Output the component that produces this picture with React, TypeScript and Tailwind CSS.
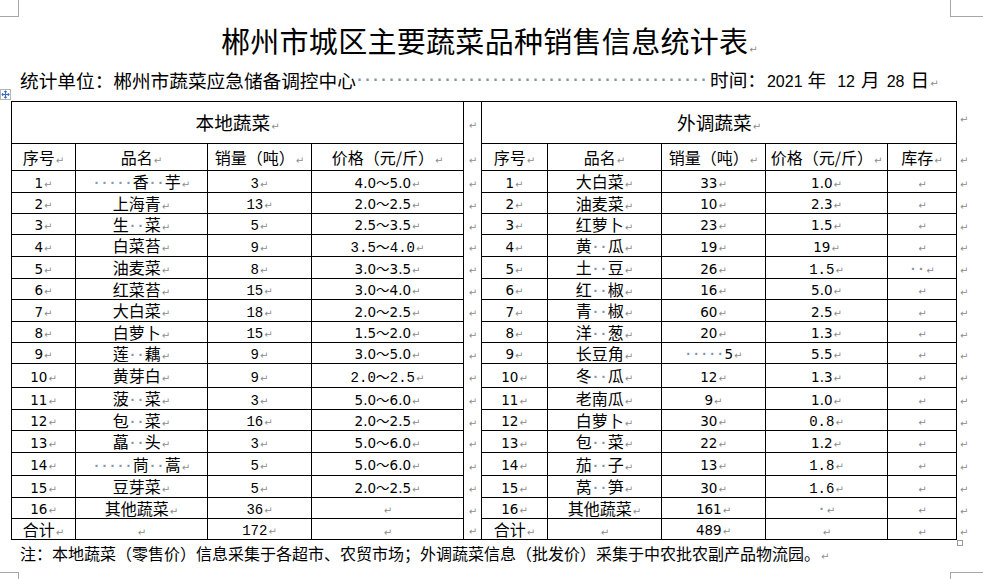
import React from 'react'

type Kind = 'cjk' | 'sans' | 'sim'

const fontOf: Record<Kind, string> = {
  cjk: "font-['Noto_Sans_CJK_SC',sans-serif] text-[16px]",
  sans: "font-['DejaVu_Sans','Noto_Sans_CJK_SC',sans-serif] text-[13.5px]",
  sim: "font-['Liberation_Mono','Noto_Sans_CJK_SC',monospace] text-[14px]",
}

// left: 序号, 品名, 销量, 价格
const leftRows: [string, string, string, string][] = [
  ['1', '·····香··芋', '3', '4.0～5.0'],
  ['2', '上海青', '13', '2.0～2.5'],
  ['3', '生··菜', '5', '2.5～3.5'],
  ['4', '白菜苔', '9', '3.5～4.0'],
  ['5', '油麦菜', '8', '3.0～3.5'],
  ['6', '红菜苔', '15', '3.0～4.0'],
  ['7', '大白菜', '18', '2.0～2.5'],
  ['8', '白萝卜', '15', '1.5～2.0'],
  ['9', '莲··藕', '9', '3.0～5.0'],
  ['10', '黄芽白', '9', '2.0～2.5'],
  ['11', '菠··菜', '3', '5.0～6.0'],
  ['12', '包··菜', '16', '2.0～2.5'],
  ['13', '藠··头', '3', '5.0～6.0'],
  ['14', '·····茼··蒿', '5', '5.0～6.0'],
  ['15', '豆芽菜', '5', '2.0～2.5'],
  ['16', '其他蔬菜', '36', ''],
]
const leftSimPrice = new Set([3, 9])

// right: 序号, 品名, 销量, 价格, 库存
const rightRows: [string, string, string, string, string][] = [
  ['1', '大白菜', '33', '1.0', ''],
  ['2', '油麦菜', '10', '2.3', ''],
  ['3', '红萝卜', '23', '1.5', ''],
  ['4', '黄··瓜', '19', '19', ''],
  ['5', '土··豆', '26', '1.5', '··'],
  ['6', '红··椒', '16', '5.0', ''],
  ['7', '青··椒', '60', '2.5', ''],
  ['8', '洋··葱', '20', '1.3', ''],
  ['9', '长豆角', '·····5', '5.5', ''],
  ['10', '冬··瓜', '12', '1.3', ''],
  ['11', '老南瓜', '9', '1.0', ''],
  ['12', '白萝卜', '30', '0.8', ''],
  ['13', '包··菜', '22', '1.2', ''],
  ['14', '茄··子', '13', '1.8', ''],
  ['15', '莴··笋', '30', '1.6', ''],
  ['16', '其他蔬菜', '161', '·', ''],
]
const rightSimPrice = new Set([4, 11, 13, 14])

const rowH = [
  'h-[22px]', 'h-[21px]', 'h-[21px]', 'h-[22px]', 'h-[22px]', 'h-[21px]', 'h-[22px]', 'h-[21px]',
  'h-[21px]', 'h-[24px]', 'h-[22px]', 'h-[21px]', 'h-[22px]', 'h-[23px]', 'h-[22px]', 'h-[21px]',
]

const cellB = 'border border-black p-0 text-center align-middle whitespace-nowrap'
const midB = 'border-x border-black p-0 text-center align-middle'
const extra = 'p-0 pl-[2px] text-left align-middle'

function PM() {
  return <span className="ml-[1px] font-['DejaVu_Sans',sans-serif] text-[10px] font-normal leading-none text-[#8d8d8d]">↵</span>
}

function Dots({ n }: { n: number }) {
  return (
    <>
      {Array.from({ length: n }).map((_, i) => (
        <span key={i} className="inline-block w-[8px] text-center font-['Liberation_Sans',sans-serif] text-[14px] font-bold leading-none text-[#8492aa]">·</span>
      ))}
    </>
  )
}

function Txt({ s, k }: { s: string; k: Kind }) {
  const parts = s.split(/(·+)/).filter(Boolean)
  return (
    <span className={`${fontOf[k]} leading-none text-black`}>
      {parts.map((p, i) => (p[0] === '·' ? <Dots key={i} n={p.length} /> : <span key={i}>{p}</span>))}
      <PM />
    </span>
  )
}

function MoveHandle() {
  return (
    <svg width="11" height="11" viewBox="0 0 11 11" className="absolute left-0 top-[89px]">
      <rect x="0.5" y="0.5" width="10" height="10" fill="white" stroke="#b5b5b5" />
      <g stroke="#3a6cc4" strokeWidth="1" fill="#3a6cc4">
        <line x1="5.5" y1="2" x2="5.5" y2="9" />
        <line x1="2" y1="5.5" x2="9" y2="5.5" />
        <path d="M5.5 1.5 L4 3 L7 3 Z M5.5 9.5 L4 8 L7 8 Z M1.5 5.5 L3 4 L3 7 Z M9.5 5.5 L8 4 L8 7 Z" strokeWidth="0.5" />
      </g>
    </svg>
  )
}

const num = "font-['Liberation_Sans',sans-serif] text-[16px]"

export default function App() {
  return (
    <div className="relative w-[983px] h-[579px] overflow-hidden bg-white text-black font-['Noto_Sans_CJK_SC',sans-serif]">
      {/* page corner marks */}
      <div className="absolute left-0 top-0 w-[19px] h-[17px] border-r border-b border-[#a6a6a6]" />
      <div className="absolute left-[950px] top-0 w-[33px] h-[17px] border-l border-b border-[#a6a6a6]" />
      <div className="absolute left-0 top-[572px] w-[19px] h-[7px] border-r border-t border-[#a6a6a6]" />
      <div className="absolute left-[950px] top-[572px] w-[33px] h-[7px] border-l border-t border-[#a6a6a6]" />
      <MoveHandle />
      <div className="absolute left-[957px] top-[540px] w-[6px] h-[6px] border border-[#9a9a9a] bg-white" />

      <div className="ml-[11px] w-[945px] pt-[25px]">
        <div className="h-[30px] leading-[30px] text-center pl-[12px] text-[29px] tracking-[0.3px] whitespace-nowrap">
          郴州市城区主要蔬菜品种销售信息统计表<PM />
        </div>

        <div className="mt-[12px] h-[26px] pl-[9px] flex items-center whitespace-nowrap text-[18.67px] leading-none">
          <span className="w-[336px]">统计单位：郴州市蔬菜应急储备调控中心</span>
          <span className="flex w-[352px]">
            {Array.from({ length: 44 }).map((_, i) => (
              <span key={i} className="w-[8px] text-center font-['Liberation_Sans',sans-serif] text-[16px] font-bold text-[#8492aa]">·</span>
            ))}
          </span>
          <span className="ml-[2px]">
            时间：<span className={`${num} ml-[1px] mr-[5px]`}>2021</span>年
            <span className={`${num} ml-[11px] mr-[6px]`}>12</span>月
            <span className={`${num} ml-[7px] mr-[6px]`}>28</span>日<PM />
          </span>
        </div>

        <table className="mt-[8px] table-fixed border-collapse w-[965px] leading-none">
          <colgroup>
            <col className="w-[64px]" />
            <col className="w-[132px]" />
            <col className="w-[104px]" />
            <col className="w-[152px]" />
            <col className="w-[18px]" />
            <col className="w-[66px]" />
            <col className="w-[114px]" />
            <col className="w-[104px]" />
            <col className="w-[122px]" />
            <col className="w-[69px]" />
            <col className="w-[20px]" />
          </colgroup>
          <tbody>
            <tr className="h-[42px]">
              <td colSpan={4} className={`${cellB} text-[18.67px]`}>本地蔬菜<PM /></td>
              <td className={`${midB} border-t`}><PM /></td>
              <td colSpan={5} className={`${cellB} text-[18.67px]`}>外调蔬菜<PM /></td>
              <td className={`${extra} align-top pt-[6px]`}><PM /></td>
            </tr>
            <tr className="h-[27px]">
              <td className={cellB}><Txt s="序号" k="cjk" /></td>
              <td className={cellB}><Txt s="品名" k="cjk" /></td>
              <td className={cellB}><Txt s="销量（吨）" k="cjk" /></td>
              <td className={cellB}><Txt s="价格（元/斤）" k="cjk" /></td>
              <td className={midB}><PM /></td>
              <td className={cellB}><Txt s="序号" k="cjk" /></td>
              <td className={cellB}><Txt s="品名" k="cjk" /></td>
              <td className={cellB}><Txt s="销量（吨）" k="cjk" /></td>
              <td className={cellB}><Txt s="价格（元/斤）" k="cjk" /></td>
              <td className={cellB}><Txt s="库存" k="cjk" /></td>
              <td className={extra}><PM /></td>
            </tr>
            {leftRows.map((l, i) => {
              const r = rightRows[i]
              return (
                <tr key={i} className={rowH[i]}>
                  <td className={cellB}><Txt s={l[0]} k="sans" /></td>
                  <td className={cellB}><Txt s={l[1]} k="cjk" /></td>
                  <td className={cellB}><Txt s={l[2]} k="sim" /></td>
                  <td className={cellB}><Txt s={l[3]} k={leftSimPrice.has(i) ? 'sim' : 'sans'} /></td>
                  <td className={midB}><PM /></td>
                  <td className={cellB}><Txt s={r[0]} k="sans" /></td>
                  <td className={cellB}><Txt s={r[1]} k="cjk" /></td>
                  <td className={cellB}><Txt s={r[2]} k="sans" /></td>
                  <td className={cellB}><Txt s={r[3]} k={rightSimPrice.has(i) ? 'sim' : 'sans'} /></td>
                  <td className={cellB}><Txt s={r[4]} k="sans" /></td>
                  <td className={extra}><PM /></td>
                </tr>
              )
            })}
            <tr className="h-[21px]">
              <td className={cellB}><Txt s="合计" k="cjk" /></td>
              <td className={cellB}><PM /></td>
              <td className={cellB}><Txt s="172" k="sim" /></td>
              <td className={cellB}><PM /></td>
              <td className={`${midB} border-b`}><PM /></td>
              <td className={cellB}><Txt s="合计" k="cjk" /></td>
              <td className={cellB}><PM /></td>
              <td className={cellB}><Txt s="489" k="sans" /></td>
              <td className={cellB}><PM /></td>
              <td className={cellB}><PM /></td>
              <td className={extra}><PM /></td>
            </tr>
          </tbody>
        </table>

        <div className="mt-[3px] pl-[9px] leading-[20px] text-[16px] whitespace-nowrap">
          注：本地蔬菜（零售价）信息采集于各超市、农贸市场；外调蔬菜信息（批发价）采集于中农批农副产品物流园。<PM />
        </div>
      </div>
    </div>
  )
}
